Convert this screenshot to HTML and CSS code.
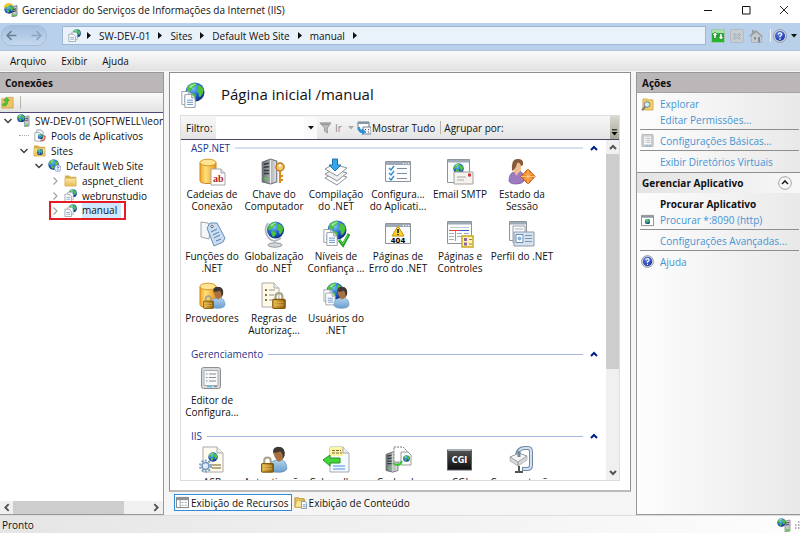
FILE: index.html
```html
<!DOCTYPE html>
<html lang="pt-BR">
<head>
<meta charset="utf-8">
<title>Gerenciador do Serviços de Informações da Internet (IIS)</title>
<link rel="stylesheet" href="styles.css">
</head>
<body>
<svg class="defs" width="0" height="0" aria-hidden="true">
  <defs>
    <radialGradient id="gSea" cx=".4" cy=".3" r=".75"><stop offset="0" stop-color="#7cc4f8"/><stop offset=".5" stop-color="#2467d2"/><stop offset="1" stop-color="#0c2878"/></radialGradient>
    <radialGradient id="gHelp" cx=".4" cy=".3" r=".8"><stop offset="0" stop-color="#5f86e8"/><stop offset="1" stop-color="#12289c"/></radialGradient>
    <linearGradient id="gGold"><stop offset="0" stop-color="#f3a526"/><stop offset=".35" stop-color="#ffe07a"/><stop offset="1" stop-color="#e8951a"/></linearGradient>
    <linearGradient id="gLock"><stop offset="0" stop-color="#e5bd52"/><stop offset=".5" stop-color="#c18d26"/><stop offset="1" stop-color="#8a5c10"/></linearGradient>
    <linearGradient id="gSteel"><stop offset="0" stop-color="#6d7276"/><stop offset=".6" stop-color="#aeb2b4"/><stop offset="1" stop-color="#e4e5e6"/></linearGradient>
    <linearGradient id="gFolder" x2="0" y2="1"><stop offset="0" stop-color="#fbe9a5"/><stop offset="1" stop-color="#e6bd52"/></linearGradient>
    <linearGradient id="gShirt" x2="0" y2="1"><stop offset="0" stop-color="#b3d3ee"/><stop offset="1" stop-color="#6a9fce"/></linearGradient>
    <linearGradient id="gBlack" x2="0" y2="1"><stop offset="0" stop-color="#555"/><stop offset="1" stop-color="#0c0c0c"/></linearGradient>
    <symbol id="globe" viewBox="0 0 20 20"><circle cx="10" cy="10" r="9.500" fill="url(#gSea)"/><path d="M2 6Q5 1 10 1Q12 2 10 4Q9 6 7 6Q8 8 5 9Q4 11 2 10ZM12 3Q17 3 18.500 8Q18 13 15 15Q13 14 14 11Q11 10 12 7Q14 6 12 3ZM6 11Q10 11 11 14Q9 18 7 18Q6 15 5 13Z" fill="#4cc43a"/><path d="M4 5Q7 1.500 12 2Q8 3 6 6Z" fill="#d8ffe0" opacity=".65"/></symbol>
    <symbol id="doc" viewBox="0 0 14 17"><path d="M1 1h8l4 4v11H1z" fill="#fff" stroke="#8d949c"/><path d="M9 1v4h4" fill="#dfe3e8" stroke="#8d949c"/><path d="M3.500 7.500h7M3.500 10h7M3.500 12.500h7" stroke="#4d86cd"/></symbol>
    <symbol id="win" viewBox="0 0 26 21"><path d="M.5.500h25v20h-25z" fill="#fbfcfd" stroke="#8e949b"/><path d="M1 1h24v3H1z" fill="#9faab7"/><path d="M18 2.500h1M20.500 2.500h1M23 2.500h1" stroke="#fff"/></symbol>
    <symbol id="lock" viewBox="0 0 12 15"><path d="M3 7V4Q3 1 6 1T9 4v3" fill="none" stroke="#a8a48e" stroke-width="2"/><rect x=".5" y="6.500" width="11" height="8" rx="1" fill="url(#gLock)" stroke="#85590f"/><path d="M2 9h8M2 11.500h8" stroke="#f0d07a" opacity=".6"/></symbol>
    <symbol id="cyl" viewBox="0 0 18 26"><path d="M1 4v18Q1 25 9 25T17 22V4z" fill="url(#gGold)" stroke="#c9861a"/><ellipse cx="9" cy="4" rx="8" ry="3.300" fill="#ffe493" stroke="#d79a2a"/></symbol>
    <symbol id="server" viewBox="0 0 16 26"><path d="M1 4l8-3 6 2v20l-6 2-8-2z" fill="url(#gSteel)" stroke="#62686d"/><path d="M9 1.500v23" stroke="#eceded"/><path d="M2.500 6l5-1M2.500 9l5-.5M2.500 12h5M2.500 15h5" stroke="#333b42" stroke-width="1.400"/><path d="M3 20h3" stroke="#54d04c" stroke-width="2"/></symbol>
    <symbol id="user" viewBox="0 0 18 24"><path d="M1 20Q1 14 6 13l6-1q5 2 5 8-1 3.500-8 3.500T1 20z" fill="url(#gShirt)" stroke="#5d8ab5" stroke-width=".6"/><path d="M5 6q0-5 5-5t4.500 6Q14 13 9.500 14 6 12 5 6z" fill="#a8713f"/><path d="M5 8Q3 1 9 .5q7 0 6 8l-2 4q1-6-2-8-3 2-6 1z" fill="#3d3833"/></symbol>
    <symbol id="folder" viewBox="0 0 14 14"><path d="M1 3V1.500h4.500L7 3h6v9.500H1z" fill="#d9ac45"/><path d="M1 4.500h12v8.500H1z" fill="url(#gFolder)" stroke="#d5aa4c" stroke-width=".7"/></symbol>
    <symbol id="app" viewBox="0 0 14 14"><use href="#globe" x="5" y="0" width="9" height="9"/><path d="M1 5.500h4.500L8 8v5.500H1z" fill="#fff" stroke="#8f969e" stroke-width=".8"/><path d="M4 3.500h4.500L10 5.500v6H8V8L5.500 5.500H4z" fill="#f6f7f8" stroke="#9aa0a8" stroke-width=".7"/><path d="M2.500 9h4M2.500 11h4" stroke="#6b8fbe" stroke-width=".8"/></symbol>
    <symbol id="iis" viewBox="0 0 14 14"><path d="M8 3l5-1v11l-5 .8z" fill="#c6c9cb" stroke="#777d82" stroke-width=".7"/><path d="M9 5l3-.5M9 7l3-.5" stroke="#42484d"/><path d="M9 12h3" stroke="#42cf3a" stroke-width="1.500"/><use href="#globe" x="0" y="0" width="9" height="9"/></symbol>
    <symbol id="settings" viewBox="0 0 20 22"><rect x=".5" y=".5" width="19" height="21" rx="2" fill="#d7dadd" stroke="#8a8f94"/><path d="M3 3.500h14v15H3z" fill="#f8f9fa" stroke="#a8adb2"/><path d="M5 7h1.500M8 7h7M5 10.500h1.500M8 10.500h7M5 14h1.500M8 14h7" stroke="#858d95"/><path d="M6 19.500h5" stroke="#4cc4e6" stroke-width="1.500"/><path d="M13 19.500h3" stroke="#7b858c"/></symbol>
    <symbol id="help" viewBox="0 0 14 14"><circle cx="7" cy="7" r="6.400" fill="#d6d8dc" stroke="#858b96" stroke-width=".8"/><circle cx="7" cy="7" r="5" fill="url(#gHelp)"/><path d="M5.200 5.500Q5.300 3.800 7 3.800t1.800 1.500Q8.800 6.300 7 7.300v1M7 9.300v1.400" fill="none" stroke="#fff" stroke-width="1.300"/></symbol>
    <symbol id="tri" viewBox="0 0 6 4"><path d="M0 0h6L3 3.500z" fill="currentColor"/></symbol>
    <symbol id="next" viewBox="0 0 4 7"><path d="M0 0l4 3.500L0 7z" fill="#111"/></symbol>
    <symbol id="open" viewBox="0 0 10 10"><path d="M1.500 3l3.500 3.500L8.500 3" fill="none" stroke="#404040" stroke-width="1.500"/></symbol>
    <symbol id="shut" viewBox="0 0 10 10"><path d="M3.500 1.500L7 5 3.500 8.500" fill="none" stroke="#a2a2a2" stroke-width="1.200"/></symbol>
    <symbol id="up" viewBox="0 0 8 6"><path d="M1 5l3-3 3 3" fill="none" stroke="currentColor" stroke-width="2"/></symbol>
  </defs>
</svg>

<header class="titlebar">
  <svg class="i14" viewBox="0 0 14 14"><path d="M8 4l5-1.500v10L8 14z" fill="#bfc3c5" stroke="#6d7378" stroke-width=".8"/><path d="M9 6.500l3-.7M9 8.500l3-.7" stroke="#33383d"/><path d="M8.500 12.500h4" stroke="#47c93a" stroke-width="1.500"/><use href="#globe" x="0" y="1" width="10" height="10"/><path d="M0 3Q2-1 7 .5q3 1 3 3Q7 1.500 3.500 3 1 4 .8 6z" fill="#f5c42e"/></svg>
  <h1>Gerenciador do Serviços de Informações da Internet (IIS)</h1>
  <div class="winbtns">
    <button aria-label="Minimizar"><svg viewBox="0 0 10 10"><path d="M1 5.500h8" stroke="#111"/></svg></button>
    <button aria-label="Maximizar"><svg viewBox="0 0 10 10"><path d="M1.500 1.500h7.500v7.500H1.500z" fill="none" stroke="#111"/></svg></button>
    <button aria-label="Fechar"><svg viewBox="0 0 10 10"><path d="M1 1l8 8M9 1L1 9" stroke="#222"/></svg></button>
  </div>
</header>

<nav class="address" aria-label="Endereço">
  <div class="history">
    <button aria-label="Voltar"><svg viewBox="0 0 10 10"><path d="M9.500 5H1M5 1L1 5l4 4" fill="none" stroke="#6c7f96" stroke-width="1.500"/></svg></button>
    <button aria-label="Avançar"><svg viewBox="0 0 10 10"><path d="M.5 5H9M5 1l4 4-4 4" fill="none" stroke="#8fa5bf" stroke-width="1.500"/></svg></button>
  </div>
  <div class="crumbs">
    <svg class="i13"><use href="#app"/></svg>
    <svg class="sep"><use href="#next"/></svg><a href="#">SW-DEV-01</a>
    <svg class="sep"><use href="#next"/></svg><a href="#">Sites</a>
    <svg class="sep"><use href="#next"/></svg><a href="#">Default Web Site</a>
    <svg class="sep"><use href="#next"/></svg><a href="#">manual</a>
    <svg class="sep"><use href="#next"/></svg>
  </div>
  <div class="navtools">
    <button aria-label="Atualizar"><svg class="i14" viewBox="0 0 14 14"><rect x=".5" y=".5" width="13" height="13" rx="1" fill="#22b62c" stroke="#a5c9ad"/><path d="M1 1h12v3H1z" fill="#a9dfaa"/><path d="M1 6.500L4 3l3 3.500H5.200v3H2.800v-3zM13 7.500L10 11 7 7.500h1.800v-3h2.400v3z" fill="#fff" stroke="#17631c" stroke-width=".6"/></svg></button>
    <button aria-label="Parar"><svg class="i14" viewBox="0 0 14 14"><rect x=".5" y=".5" width="13" height="13" rx="1" fill="#c8cdd3" stroke="#b3bac3"/><path d="M3.500 4.500l7 5.500M10.500 4.500L3.500 10" stroke="#98a0a9" stroke-width="2.200"/><path d="M3.500 4.500l7 5.500M10.500 4.500L3.500 10" stroke="#e1e4e8" stroke-width=".8"/></svg></button>
    <button aria-label="Início"><svg class="i14" viewBox="0 0 14 14"><path d="M2.500 7v6.500h10V7L7.500 2z" fill="#c6c9cd" stroke="#9ba1a8" stroke-width=".6"/><path d="M0 7l3-3V1h2v1.500L7 1l7 6.500-1 .8-6-5-6 4.500z" fill="#989da4"/><path d="M5 8h2v2.500H5zM9 8h2v5.500H9z" fill="#858b93"/></svg></button>
    <span class="bar"></span>
    <button aria-label="Ajuda"><svg class="i14"><use href="#help"/></svg><svg class="tri"><use href="#tri"/></svg></button>
  </div>
</nav>

<nav class="menubar" aria-label="Menu">
  <button>Arquivo</button><button>Exibir</button><button>Ajuda</button>
</nav>

<main class="workspace">
  <section class="connections">
    <h2 class="panelhead">Conexões</h2>
    <div class="treetools"><button aria-label="Subir"><svg class="i13" viewBox="0 0 14 14"><path d="M1 3h5l1.500-1.500H13V13H1z" fill="#ecc768" stroke="#c79a3a" stroke-width=".8"/><path d="M3 11Q8 10 7 5h2L6 1 3 5h2q0 3-4 4z" fill="#4cc33b" stroke="#2f8d28" stroke-width=".5"/></svg></button><span class="bar"></span></div>
    <ul class="tree">
      <li class="l0"><svg class="chev"><use href="#open"/></svg><svg class="i13"><use href="#iis"/></svg><span>SW-DEV-01 (SOFTWELL\leona</span></li>
      <li class="l1"><i class="chev stem"></i><svg class="i13" viewBox="0 0 14 14"><path d="M4 1h5l2 2v8H4z" fill="#eef1f4" stroke="#8c949d" stroke-width=".8"/><path d="M2 4h5l2 2v7H2z" fill="#fff" stroke="#8c949d" stroke-width=".8"/><use href="#globe" x="5" y="5" width="6" height="6"/><path d="M8 12.500q5 1 5-4.500l-2-1" fill="none" stroke="#d3513f" stroke-width="1.300"/></svg><span>Pools de Aplicativos</span></li>
      <li class="l1"><svg class="chev"><use href="#open"/></svg><svg class="i13" viewBox="0 0 14 14"><use href="#folder"/><use href="#globe" x="4" y="5" width="7" height="7"/></svg><span>Sites</span></li>
      <li class="l2"><svg class="chev"><use href="#open"/></svg><svg class="i13" viewBox="0 0 14 14"><use href="#globe" x="0" y="0" width="12" height="12"/><circle cx="10.500" cy="10" r="3.500" fill="#eef2fb" stroke="#6a84c6" stroke-width=".7"/><path d="M9.500 9q1-1.300 2 0 0 .8-1 1.300M10.500 11v1" fill="none" stroke="#2848a8" stroke-width=".9"/></svg><span>Default Web Site</span></li>
      <li class="l3"><svg class="chev"><use href="#shut"/></svg><svg class="i13"><use href="#folder"/></svg><span>aspnet_client</span></li>
      <li class="l3"><svg class="chev"><use href="#shut"/></svg><svg class="i13"><use href="#app"/></svg><span>webrunstudio</span></li>
      <li class="l3 current"><svg class="chev"><use href="#shut"/></svg><svg class="i13"><use href="#app"/></svg><span>manual</span></li>
    </ul>
    <div class="hscroll" aria-hidden="true"><svg viewBox="0 0 8 8"><path d="M5.500 1L2.500 4l3 3" fill="none" stroke="#505050" stroke-width="1.600"/></svg><div class="track"><i></i></div><svg viewBox="0 0 8 8"><path d="M2.500 1l3 3-3 3" fill="none" stroke="#505050" stroke-width="1.600"/></svg></div>
  </section>

  <section class="center">
    <div class="page">
      <div class="pagehead">
        <svg class="i28" viewBox="0 0 28 28"><use href="#globe" x="5" y="0" width="20" height="20"/><use href="#doc" x="1" y="8" width="12" height="16"/><use href="#doc" x="4" y="11" width="12" height="16"/></svg>
        <h2>Página inicial /manual</h2>
      </div>
      <div class="box">
        <div class="filterbar">
          <label for="filtro">Filtro:</label><input id="filtro" type="text"><button class="drop" aria-label="Filtros recentes"><svg class="tri"><use href="#tri"/></svg></button>
          <button class="go"><svg class="i13" viewBox="0 0 14 14"><path d="M1 2h12L9 7.500V13l-3-2V7.500z" fill="#bbb" stroke="#999"/><path d="M2 3.500h9" stroke="#888"/></svg>Ir<svg class="tri"><use href="#tri"/></svg></button>
          <button class="showall"><svg class="i14" viewBox="0 0 14 14"><path d="M1 1h11v8H1z" fill="#fff" stroke="#6d7c8c"/><path d="M1 1h11v2H1z" fill="#8395a8"/><path d="M6 6h8v7H6z" fill="#f4f6f8" stroke="#758494"/><path d="M8 8.500h1M11 8.500h1M8 11h1M11 11h1" stroke="#446"/><path d="M1 6q0 6 4 6v2l4-3.200L5 7.500v2Q3 9 3 6z" fill="#2d8ed6"/></svg>Mostrar Tudo</button>
          <span class="bar"></span><span class="groupby">Agrupar por:</span>
          <button class="more" aria-label="Mais opções"><svg viewBox="0 0 7 7"><path d="M1 .8h5" stroke="#000"/><path d="M.5 3h6l-3 3.500z" fill="#000"/></svg></button>
        </div>
        <div class="listing">
          <div class="groups">
            <section class="group pale">
              <h3>ASP.NET<svg><use href="#up"/></svg></h3>
              <div class="grid">
                <button><svg viewBox="0 0 28 28"><use href="#cyl" x="1" y="0" width="18" height="27"/><path d="M13 11h10l4 4v12H13z" fill="#fff" stroke="#a6a6a6"/><path d="M23 11v4h4" fill="#e5e5e5" stroke="#a6a6a6"/><text x="15" y="24" class="ab">ab</text></svg>Cadeias de<br>Conexão</button>
                <button><svg viewBox="0 0 28 28"><use href="#server" x="1" y="0" width="17" height="27"/><circle cx="20" cy="9" r="4" fill="#f9c767" stroke="#c8761c" stroke-width="1.500"/><circle cx="20" cy="7.500" r="1.300" fill="#fff"/><path d="M20 13v12M20 18h3M20 22h3" stroke="#d98a25" stroke-width="2.200"/></svg>Chave do<br>Computador</button>
                <button><svg viewBox="0 0 28 28"><path d="M3 20l9-5 13 4-10 8z" fill="#fff" stroke="#8b9299"/><path d="M3 16l9-5 13 4-10 8z" fill="#eef0f2" stroke="#8b9299"/><path d="M3 11l9-5 13 4-10 8z" fill="#fff" stroke="#8b9299"/><path d="M10.500 1h5v6h3.500l-6 6-6-6h3.500z" fill="#35a6e8" stroke="#1c72b5"/></svg>Compilação<br>do .NET</button>
                <button><svg viewBox="0 0 28 28"><use href="#win" x="1" y="3" width="26" height="21"/><path d="M5 10l2 2 3-4M5 15l2 2 3-4M5 20l2 2 3-4" fill="none" stroke="#258bd5" stroke-width="1.300"/><path d="M13 10.500h10M13 15.500h10M13 20.500h10" stroke="#7f8d9e"/></svg>Configura...<br>do Aplicati...</button>
                <button><svg viewBox="0 0 28 28"><path d="M1.500 1.500h22v23h-22z" fill="#fbfcfd" stroke="#8e949b"/><path d="M2 2h21v2.500H2z" fill="#9faab7"/><use href="#globe" x="7" y="5" width="11" height="11"/><path d="M8 14h19v12H8z" fill="#f5f3f0" stroke="#a5a09a"/><path d="M11 19h9M11 22h7" stroke="#aaa"/><path d="M22 15.500h3v3h-3z" fill="#cf3535"/></svg>Email SMTP</button>
                <button><svg viewBox="0 0 28 28"><path d="M1 23q0-8 5-9l6-1q4 2 4 10-2 3-8 3t-7-3z" fill="#9d7ac2" stroke="#71529a" stroke-width=".7"/><path d="M6 5h7v7q-1 3-3 3l-1 3-3-4z" fill="#efbd90"/><path d="M4 13Q3 1 9 1q7-1 6 6l-2 1q-1-4-4-3-1 6-5 8z" fill="#85593b"/><path d="M20 11l7 7.500-7 7.500-7-7.500z" fill="#f38a26" stroke="#b8520f"/><path d="M20 11v15M13 18.500h14M16.500 15l7 7M23.500 15l-7 7" stroke="#ffd59b" stroke-width=".7"/></svg>Estado da<br>Sessão</button>
                <button><svg viewBox="0 0 28 28"><path d="M3 2l7 1 3 5-2 11-8-2z" fill="#f5f6f8" stroke="#9da4ad"/><path d="M9 8l3-5 7 0 8 15-2 4-9 4z" fill="#c9dcf0" stroke="#678eb7"/><circle cx="14" cy="6.500" r="1.200" fill="#fff" stroke="#667"/><path d="M13 12l6-3M15 15l6-3M16 18l6-3M18 21l5-2" stroke="#507eaf"/></svg>Funções do<br>.NET</button>
                <button><svg viewBox="0 0 28 28"><ellipse cx="15" cy="25" rx="7" ry="2.200" fill="#d3d7db" stroke="#90979e"/><path d="M15 23v-3M8 3Q3 10 8 17t13 1" fill="none" stroke="#b2b7bc" stroke-width="1.700"/><use href="#globe" x="6.500" y="1" width="18" height="18"/></svg>Globalização<br>do .NET</button>
                <button><svg viewBox="0 0 28 28"><use href="#globe" x="5" y="0" width="20" height="20"/><use href="#doc" x="1" y="8" width="12" height="16"/><use href="#doc" x="4" y="11" width="12" height="16"/><path d="M17 20l4 5 6-11" fill="none" stroke="#249d26" stroke-width="3"/><path d="M17.500 20l3.500 4 5-9" fill="none" stroke="#5fe052"/></svg>Níveis de<br>Confiança ...</button>
                <button><svg viewBox="0 0 28 28"><use href="#win" x="1" y="3" width="26" height="21"/><path d="M14 6l6 10H8z" fill="#ffd52b" stroke="#c28e12"/><path d="M14 9v4M14 14v1" stroke="#111" stroke-width="1.500"/><text x="14" y="23" class="n404">404</text></svg>Páginas de<br>Erro do .NET</button>
                <button><svg viewBox="0 0 28 28"><path d="M1.500 1.500h24v22h-24z" fill="#fbfcfd" stroke="#8e949b"/><path d="M2 2h23v2.500H2z" fill="#9faab7"/><path d="M4 7.500h19" stroke="#c6ccd3"/><path d="M3 10.500h12" stroke="#df4040"/><path d="M14 10.500h9" stroke="#3655d0"/><path d="M3 13.500h5M3 16.500h5M3 19.500h5M11 13.500h5M18 13.500h5M11 16.500h5" stroke="#a5adb8"/><path d="M9.500 11v10" stroke="#70a0e0"/><path d="M16 16h11v11H16z" fill="#fff3b5" stroke="#cba91c" stroke-width="1.500"/><path d="M18 18h3v3h-3zM18 22.500h3v3h-3z" fill="#90679c"/><path d="M23 19.500h3M23 24h3" stroke="#8b8050"/></svg>Páginas e<br>Controles</button>
                <button><svg viewBox="0 0 28 28"><path d="M1.500 1.500h17v19h-17z" fill="#fbfcfd" stroke="#8e949b"/><path d="M2 2h16v2.500H2z" fill="#9faab7"/><path d="M5 6h12v17H5z" fill="#f8f9fa" stroke="#9ba2aa"/><path d="M7 9h8" stroke="#adb3bb"/><path d="M6 12h20v14H6z" fill="#d6e2ee" stroke="#8d9bac"/><path d="M8 14.500h7v8H8z" fill="#fff" stroke="#648fbb"/><circle cx="11.500" cy="18.500" r="2" fill="#85b2dc"/><path d="M17 15.500h7M17 18.500h7M17 21.500h7" stroke="#7c96b1"/></svg>Perfil do .NET</button>
                <button><svg viewBox="0 0 28 28"><use href="#cyl" x="1" y="0" width="18" height="27"/><use href="#user" x="11" y="4" width="17" height="23"/><use href="#lock" x="5" y="13" width="11" height="14"/></svg>Provedores</button>
                <button><svg viewBox="0 0 28 28"><path d="M2 1h12l5 5v19H2z" fill="#fff9e8" stroke="#aaa"/><path d="M14 1v5h5" fill="#eee" stroke="#aaa"/><path d="M5 8h2M5 13h2M5 18h2" stroke="#867442" stroke-width="2"/><path d="M9 8h6M9 13h5M9 18h4" stroke="#8a8fa0"/><use href="#lock" x="12" y="10" width="14" height="17"/></svg>Regras de<br>Autorizaç...</button>
                <button><svg viewBox="0 0 28 28"><use href="#globe" x="4" y="0" width="18" height="18"/><use href="#doc" x="1" y="7" width="11" height="13"/><use href="#doc" x="3" y="10" width="11" height="14"/><use href="#user" x="11" y="4" width="17" height="23"/></svg>Usuários do<br>.NET</button>
              </div>
            </section>
            <section class="group">
              <h3>Gerenciamento<svg><use href="#up"/></svg></h3>
              <div class="grid"><button><svg viewBox="0 0 28 28"><use href="#settings" x="3" y="3" width="20" height="22"/></svg>Editor de<br>Configura...</button></div>
            </section>
            <section class="group">
              <h3>IIS<svg><use href="#up"/></svg></h3>
              <div class="grid">
                <button><svg viewBox="0 0 28 28"><path d="M5 1h14l6 6v19H5z" fill="#fffbee" stroke="#aaa"/><path d="M19 1v6h6" fill="#eee" stroke="#aaa"/><use href="#globe" x="10" y="6" width="10" height="10"/><path d="M14 19h9M14 22h9" stroke="#a0925c" stroke-width="1.500"/><circle cx="7.500" cy="20" r="5.500" fill="none" stroke="#7d9cc0" stroke-width="2" stroke-dasharray="2 1.500"/><circle cx="7.500" cy="20" r="3.500" fill="#e0ecf8" stroke="#7294bb" stroke-width="1.700"/></svg>ASP</button>
                <button><svg viewBox="0 0 28 28"><use href="#user" x="8" y="0" width="20" height="27"/><use href="#lock" x="1" y="10" width="13" height="17"/></svg>Autenticação</button>
                <button><svg viewBox="0 0 28 28"><path d="M8 1h13l6 6v19H8z" fill="#f5faff" stroke="#a4abb3"/><path d="M8 1h13v9H8z" fill="#fff3a6"/><path d="M21 1v6h6" fill="#eee" stroke="#aaa"/><path d="M10 4.500h9M10 7h10" stroke="#756b35" stroke-dasharray="3 1"/><path d="M11 20h12M11 23h12" stroke="#4b8ce0"/><path d="M1 14l7-5v3h10v5H8v3z" fill="#46d43a" stroke="#23971f"/></svg>Cabeçalhos</button>
                <button><svg viewBox="0 0 28 28"><use href="#server" x="1" y="5" width="14" height="22"/><path d="M10 1h9l4 4v11H10z" fill="#fff" stroke="#777" stroke-dasharray="2 1"/><path d="M17 6h7l3 3v10H17z" fill="#fff" stroke="#999"/><use href="#globe" x="19" y="9" width="7" height="7"/><path d="M9 17q6 5 9-2" fill="none" stroke="#3bc633" stroke-width="2"/></svg>Cache de</button>
                <button><svg viewBox="0 0 28 28"><rect x="1.500" y="4" width="24" height="20" fill="url(#gBlack)" stroke="#59616b"/><path d="M2 4.500h23" stroke="#9eabb8"/><text x="13.500" y="17" class="cgi">CGI</text></svg>CGI</button>
                <button><svg viewBox="0 0 28 28"><path d="M9 9Q10 2 17 2h3q3 0 3 4v13q0 4-4 4h-5" fill="none" stroke="#7288a2" stroke-width="4"/><path d="M10 8q1-6 7-6h3q3 0 3 4v13q0 4-4 4h-4" fill="none" stroke="#d0e1f2" stroke-width="2"/><path d="M2 11l9-4 8 3-9 6z" fill="#f5f5f5" stroke="#999"/><path d="M2 11v4l8 5v-4zM10 16l9-6v4l-9 6z" fill="#d5d8da" stroke="#999" stroke-width=".6"/><path d="M11 20v6M7 26h8" stroke="#555" stroke-width="2"/><path d="M11 5v6" stroke="#7288a2" stroke-width="3"/></svg>Compactação</button>
              </div>
            </section>
          </div>
          <div class="vscroll" aria-hidden="true"><svg><use href="#up"/></svg><div class="track"><i></i></div><svg class="down"><use href="#up"/></svg></div>
        </div>
      </div>
    </div>
    <div class="tabs">
      <button class="on"><svg class="i13" viewBox="0 0 14 14"><path d="M.5 1.500h13v11H.5z" fill="#fff" stroke="#777"/><path d="M1 2h12v2.500H1z" fill="#8c9296"/><path d="M4.500 4v8M6 7h2M9.500 7h2M6 10h2M9.500 10h2" stroke="#8d9b9d"/></svg>Exibição de Recursos</button>
      <button><svg class="i13" viewBox="0 0 14 14"><path d="M1 2h4l1 1h5v9H1z" fill="#edc85d" stroke="#b18b30"/><path d="M3 5h9l-2 7H1z" fill="#fbe594" stroke="#c39a3d" stroke-width=".6"/><path d="M8 6h4l1.500 2v5.500H8z" fill="#fff" stroke="#8393a8"/><path d="M9.500 9.500h3M9.500 11.500h3" stroke="#5f90cc"/></svg>Exibição de Conteúdo</button>
    </div>
  </section>

  <aside class="actions">
    <h2 class="panelhead">Ações</h2>
    <ul>
      <li><svg class="i13" viewBox="0 0 14 14"><path d="M2 1h5l1 1h5v11H2z" fill="#f0ce66" stroke="#c99f3e" stroke-width=".7"/><circle cx="6.500" cy="7" r="3" fill="#d5ecfb" stroke="#627d98"/><path d="M4.500 9.500L1 13" stroke="#6b737c" stroke-width="1.700"/></svg><a href="#">Explorar</a></li>
      <li><a href="#">Editar Permissões...</a></li>
      <li class="rule"><svg class="i13"><use href="#settings"/></svg><a href="#">Configurações Básicas...</a></li>
      <li class="rule"><a href="#">Exibir Diretórios Virtuais</a></li>
    </ul>
    <h3>Gerenciar Aplicativo<button aria-label="Recolher"><svg viewBox="0 0 14 14"><circle cx="7" cy="7" r="6.300" fill="#f8f8f8" stroke="#8b8b8b" stroke-width=".8"/><path d="M4 8l3-3 3 3" fill="none" stroke="#222" stroke-width="1.600"/></svg></button></h3>
    <ul>
      <li><strong>Procurar Aplicativo</strong></li>
      <li><svg class="i13" viewBox="0 0 14 14"><path d="M.5 1.500h13v11H.5z" fill="#fff" stroke="#83898f"/><path d="M1 2h12v2H1z" fill="#8f969d"/><use href="#globe" x="4" y="5" width="6" height="6"/></svg><a href="#">Procurar *:8090 (http)</a></li>
      <li class="rule"><a href="#">Configurações Avançadas...</a></li>
      <li class="rule"><svg class="i13"><use href="#help"/></svg><a href="#">Ajuda</a></li>
    </ul>
  </aside>
</main>

<footer class="status"><span>Pronto</span><svg class="i14"><use href="#iis"/></svg><svg class="grip" viewBox="0 0 6 8"><path d="M4 1h1.500M1 4h1.500M4 4h1.500M1 7h1.500M4 7h1.500" stroke="#999" stroke-width="1.500"/></svg></footer>
</body>
</html>
```
FILE: styles.css
```css
*, *::after { box-sizing: border-box; }
body {
  margin: 0;
  height: 100vh;
  display: flex;
  flex-direction: column;
  background: #f5f5f5;
  color: #111;
  font: 10px/12px "Open Sans", "Noto Sans", sans-serif;
  overflow: hidden;
  white-space: nowrap;
}
h1, h2, h3, ul { margin: 0; padding: 0; font-size: inherit; }
ul { list-style: none; }
button, input { font: inherit; color: inherit; border: 0; padding: 0; margin: 0; background: none; }
button { display: flex; align-items: center; }
a { color: inherit; text-decoration: none; }
svg { display: block; flex: none; }
.defs { position: absolute; }
.i13 { width: 13px; height: 13px; }
.i14 { width: 14px; height: 14px; }
.i28 { width: 28px; height: 28px; }
.tri { width: 6px; height: 4px; }
.bar { width: 1px; height: 13px; background: #b5b5a8; }

.titlebar { flex: none; height: 23px; display: flex; align-items: center; padding: 0 8px 3px 4px; gap: 4px; background: #fff; }
.titlebar h1 { font-weight: 400; }
.winbtns { margin-left: auto; display: flex; gap: 28px; padding-right: 3px; }
.winbtns svg { width: 10px; height: 10px; }

.address { flex: none; height: 28px; display: flex; align-items: center; background: #b9d0ea; border-bottom: 1px solid #a9c2df; padding: 0 3px 2px 1px; }
.history { width: 46px; height: 21px; display: flex; align-items: center; justify-content: space-between; padding: 0 4px; border-radius: 10px; background: linear-gradient(#a3bedd, #c5d8ee); border: 1px solid #a5bddb; }
.history svg { width: 11px; height: 11px; }
.crumbs { flex: 1; height: 19px; margin-left: 15px; display: flex; align-items: center; padding-left: 5px; background: #e9f1fa; border: 1px solid #9db7d6; }
.crumbs a { margin: 0 8px; }
.crumbs .i13 { margin-right: 6px; }
.sep { width: 4px; height: 7px; }
.navtools { display: flex; align-items: center; gap: 5px; margin-left: 5px; }
.navtools .bar { background: #eef4fb; margin-left: 2px; }
.navtools .tri { margin-left: 4px; }
.navtools button:last-child { margin-left: -3px; }

.menubar { flex: none; height: 20px; display: flex; align-items: center; gap: 15px; padding-left: 10px; background: linear-gradient(#fafafa, #e1e1e1); }

.workspace { flex: 1; min-height: 0; display: flex; padding-top: 1px; }
.panelhead { flex: none; height: 20px; display: flex; align-items: center; padding-left: 5px; background: #bbb7b9; border-bottom: 1px solid #a5a2a4; }

.connections { width: 164px; flex: none; display: flex; flex-direction: column; background: #fff; border: solid #979797; border-width: 1px 1px 1px 0; }
.treetools { flex: none; height: 20px; display: flex; align-items: center; gap: 6px; padding-left: 1px; background: linear-gradient(#fafafa, #e2e2e2); border-bottom: 1px solid #4e4a78; }
.tree { flex: 1; overflow: hidden; }
.tree li { position: relative; height: 15px; display: flex; align-items: center; gap: 5px; }
.tree li .i13 { margin-left: -1px; }
.tree span { padding-right: 4px; }
.l0 { padding-left: 3px; }
.l1 { padding-left: 19px; }
.l2 { padding-left: 34px; }
.l3 { padding-left: 50px; }
.chev { width: 10px; height: 10px; flex: none; }
.stem { height: 1px; border-top: 1px dotted #aaa; }
.current span { background: #cde8ff; height: 15px; line-height: 14px; }
.current::after { content: ""; position: absolute; left: 49px; top: -2px; width: 77px; height: 19px; border: 2px solid #e51c23; }
.hscroll { flex: none; height: 13px; display: flex; align-items: center; background: #f0f0f0; }
.hscroll svg { width: 10px; height: 9px; margin: 0 2px; }
.hscroll .track { flex: 1; height: 100%; }
.hscroll i { display: block; width: 82%; height: 100%; background: #cdcdcd; margin-left: -1px; }

.center { flex: 1; min-width: 0; display: flex; flex-direction: column; margin: 0 5px; }
.page { flex: 1; min-height: 0; display: flex; flex-direction: column; background: #fff; border: 1px solid #8e8e8e; border-bottom: 2px solid #bbb; padding: 0 10px 9px; }
.pagehead { flex: none; height: 42px; display: flex; align-items: center; gap: 13px; padding-top: 4px; }
.pagehead h2 { font-size: 15px; line-height: 20px; font-weight: 400; padding-bottom: 4px; }
.box { flex: 1; min-height: 0; display: flex; flex-direction: column; border: 1px solid #ddd; }
.filterbar { flex: none; height: 24px; display: flex; align-items: center; padding-left: 5px; background: linear-gradient(#f7f7f7, #e4e4e4); border-bottom: 1px solid #4a4766; }
.filterbar label { width: 30px; }
.filterbar input { width: 88px; height: 22px; background: #fff; outline: 0; }
.drop { width: 13px; height: 22px; background: #fafafa; justify-content: center; }
.go { margin-left: 2px; gap: 3px; color: #8a8a8a; }
.go .tri { margin-left: 3px; color: #aaa; }
.showall { margin-left: 3px; gap: 1px; }
.filterbar .bar { margin: 0 3px 0 5px; }
.more { width: 9px; height: 23px; margin-left: auto; align-items: flex-end; justify-content: center; padding-bottom: 3px; background: linear-gradient(#d8d8cf, #a6a698); }
.more svg { width: 7px; height: 7px; }

.listing { flex: 1; min-height: 0; display: flex; }
.groups { flex: 1; min-width: 0; overflow: hidden; padding-top: 1px; }
.group { padding-bottom: 6px; }
.group h3 { height: 14px; display: flex; align-items: center; gap: 5px; padding: 0 8px 0 10px; font-weight: 400; color: #26368c; }
.group h3::after { content: ""; order: 1; flex: 1; height: 1px; background: #a6b6dd; }
.pale h3::after { height: 2px; background: #d5e0f1; }
.group h3 svg { order: 2; width: 8px; height: 6px; margin-left: 2px; color: #001e8c; }
.grid { display: grid; grid-template-columns: repeat(auto-fill, 62px); grid-auto-rows: 62px; }
.grid button { flex-direction: column; padding-top: 3px; text-align: center; }
.grid svg { width: 28px; height: 28px; margin-bottom: 2px; }
.ab { font: bold 10px "Liberation Serif", serif; fill: #b51f24; }
.n404 { font: bold 7px "DejaVu Sans", sans-serif; text-anchor: middle; }
.cgi { font: bold 8px "DejaVu Sans", sans-serif; fill: #fff; text-anchor: middle; }

.vscroll { width: 13px; flex: none; display: flex; flex-direction: column; align-items: center; background: #f0f0f0; color: #555; }
.vscroll svg { width: 8px; height: 6px; margin: 4px 0; }
.vscroll .down { transform: rotate(180deg); }
.vscroll .track { flex: 1; width: 100%; }
.vscroll i { display: block; height: 69%; background: #cdcdcd; }

.tabs { flex: none; height: 23px; display: flex; align-items: center; padding: 0 0 2px 5px; }
.tabs button { height: 17px; padding: 0 2px 0 1px; gap: 2px; border: 1px solid transparent; }
.tabs .on { background: #fff; border-color: #2f8bd8; }

.actions { width: 164px; flex: none; border: 1px solid #979797; border-right: 0; background: linear-gradient(90deg, #fdfdfd, #e9e9e9); }
.actions ul { padding: 3px 1px 2px 3px; }
.actions li { display: flex; align-items: center; height: 16px; padding-left: 20px; color: #4494d3; }
.actions li .i13 { margin: 0 6px 0 -19px; }
.actions .rule { height: 20px; padding-top: 2px; border-top: 1px solid #8e8e8e; margin-top: 1px; }
.actions strong { color: #111; }
.actions h3 { height: 21px; display: flex; align-items: center; justify-content: space-between; padding: 0 8px 0 5px; background: linear-gradient(90deg, #e4e4e4, #f7f7f7); border-top: 1px solid #8e8e8e; }
.actions h3 svg { width: 14px; height: 14px; }

.status { flex: none; height: 18px; display: flex; align-items: center; padding-left: 2px; gap: 3px; background: linear-gradient(90deg, #e5e5e5, #fdfdfd); border-top: 1px solid #ddd; }
.status span { flex: 1; }
.grip { width: 6px; height: 8px; }
```
